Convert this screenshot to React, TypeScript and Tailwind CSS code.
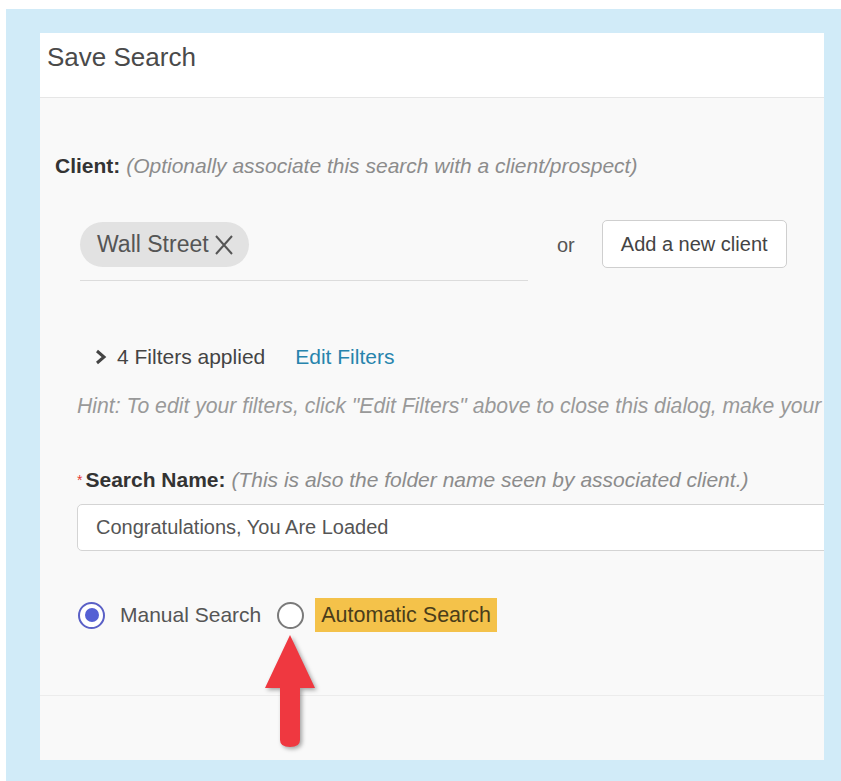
import React, { useState } from 'react';

const font = { fontFamily: '"Liberation Sans", Arial, sans-serif' };

const Radio = ({ checked, onClick }: { checked: boolean; onClick: () => void }) => (
  <button
    onClick={onClick}
    className={`w-[27px] h-[27px] rounded-full border-2 flex items-center justify-center shrink-0 bg-white ${
      checked ? 'border-[#5a60c6]' : 'border-[#7a7a7a]'
    }`}
  >
    {checked && <span className="w-[14px] h-[14px] rounded-full bg-[#5560d4]" />}
  </button>
);

const SaveSearch = () => {
  const [mode, setMode] = useState<'manual' | 'auto'>('manual');
  const [name, setName] = useState('Congratulations, You Are Loaded');

  return (
    <div className="relative w-[784px] h-[727px] bg-[#f9f9f9] flex flex-col overflow-hidden">
      {/* header */}
      <div className="h-[65px] shrink-0 bg-white border-b border-[#e6e6e6] pt-[9px] pl-[7px]">
        <h2 className="text-[26px] leading-[30px] text-[#4a4a4a]">Save Search</h2>
      </div>

      <div className="flex-1 pt-[56px] pl-[15px]">
        <p className="text-[21px] leading-[24px] whitespace-nowrap">
          <span className="font-bold text-[#333]">Client:</span>{' '}
          <span className="italic text-[#8c8c8c]">(Optionally associate this search with a client/prospect)</span>
        </p>

        <div className="mt-[42px] ml-[25px] flex items-start">
          <div className="w-[448px] pt-[2px] pb-[13px] border-b border-[#dcdcdc]">
            <div className="inline-flex items-center h-[45px] pl-[17px] pr-[13px] rounded-full bg-[#e2e2e2] text-[23px] text-[#555]">
              Wall Street
              <svg width="24" height="24" viewBox="0 0 24 24" className="ml-[3px]" fill="none" stroke="#555" strokeWidth="2">
                <path d="M4 3 L20 21 M20 3 L4 21" />
              </svg>
            </div>
          </div>
          <div className="h-[50px] flex items-center ml-[29px] text-[20px] text-[#555]">or</div>
          <button className="ml-[27px] h-[48px] px-[18px] bg-white border border-[#cfcfcf] rounded-[5px] text-[20px] text-[#444]">
            Add a new client
          </button>
        </div>

        <div className="mt-[64px] ml-[40px] flex items-center h-[24px] text-[21px]">
          <svg width="12" height="16" viewBox="0 0 12 16" fill="none" stroke="#444" strokeWidth="3">
            <path d="M2 2 L9 8 L2 14" />
          </svg>
          <span className="ml-[10px] text-[#444]">4 Filters applied</span>
          <button className="ml-[30px] text-[#2784ad]">Edit Filters</button>
        </div>

        <p className="mt-[25px] ml-[22px] text-[21.2px] leading-[24px] italic text-[#999] whitespace-nowrap">
          Hint: To edit your filters, click "Edit Filters" above to close this dialog, make your
        </p>

        <p className="mt-[50px] ml-[22px] text-[21px] leading-[24px] whitespace-nowrap">
          <span className="text-[#e53935] text-[14px] align-top mr-[3px]">*</span>
          <span className="font-bold text-[#333]">Search Name:</span>{' '}
          <span className="italic text-[#8c8c8c]">(This is also the folder name seen by associated client.)</span>
        </p>

        <input
          value={name}
          onChange={e => setName(e.target.value)}
          className="mt-[12px] ml-[22px] block w-[800px] h-[47px] px-[18px] bg-white border border-[#d4d4d4] rounded-[5px] text-[20px] text-[#555] outline-none"
          style={font}
        />

        <div className="mt-[47px] ml-[23px] flex items-center h-[34px] text-[21px]">
          <Radio checked={mode === 'manual'} onClick={() => setMode('manual')} />
          <span className="ml-[15px] text-[#555]">Manual Search</span>
          <span className="ml-[16px]">
            <Radio checked={mode === 'auto'} onClick={() => setMode('auto')} />
          </span>
          <span className="ml-[11px] h-[34px] px-[6px] flex items-center bg-[#f4c24a] text-[#4a3d1a] text-[21.5px]">
            Automatic Search
          </span>
        </div>
      </div>

      {/* footer */}
      <div className="h-[65px] shrink-0 border-t border-[#ececec]" />

      {/* callout arrow */}
      <svg
        width="62"
        height="124"
        viewBox="0 0 62 124"
        className="absolute left-[218px] top-[597px] drop-shadow-[2px_2px_2px_rgba(0,0,0,0.35)]"
      >
        <path d="M32 5 L57 58 L42 58 L42 110 Q42 117 32 117 Q22 117 22 110 L22 58 L7 58 Z" fill="#ef3840" />
      </svg>
    </div>
  );
};

export default function App() {
  return (
    <div className="w-[841px] h-[781px] bg-white pt-[9px] pl-[6px]" style={font}>
      <div className="w-full h-full bg-[#d1ebf8] pt-[24px] pl-[34px]">
        <SaveSearch />
      </div>
    </div>
  );
}
